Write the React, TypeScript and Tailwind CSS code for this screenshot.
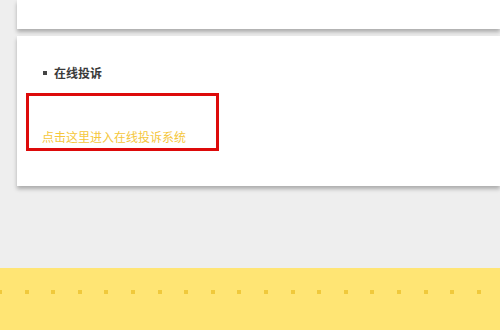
const dots = Array.from({ length: 19 });

export default function App() {
  return (
    <div
      className="w-[500px] h-[330px] overflow-hidden bg-[#eeeeee] flex flex-col"
      style={{ fontFamily: '"Microsoft YaHei", "Noto Sans CJK SC", sans-serif' }}
    >
      {/* card above (scrolled) */}
      <div className="ml-[17px] h-[29px] shrink-0 bg-white shadow-[0_3px_4px_rgba(0,0,0,0.28)]" />

      {/* complaint card */}
      <div className="ml-[17px] mt-[7px] h-[150px] shrink-0 bg-white shadow-[0_3px_4px_rgba(0,0,0,0.28)] pl-[9px] pt-[30px]">
        <div className="flex items-center pl-[17px] text-[12px] font-bold text-[#3a3a3a] leading-[14px]">
          <span className="w-[4px] h-[4px] bg-[#444444] mr-[7px]" />
          在线投诉
        </div>
        <div className="mt-[13px] w-[193px] h-[58px] border-[3px] border-[#dd0a0a] pt-[27px] pl-[13px]">
          <a className="text-[12px] text-[#f5c73c] leading-[14px] cursor-pointer">点击这里进入在线投诉系统</a>
        </div>
      </div>

      <div className="flex-1" />

      {/* yellow footer */}
      <div className="h-[62px] shrink-0 bg-[#ffe574] pt-[22px] flex">
        <div className="flex gap-[22.6px] -ml-[2px]">
          {dots.map((_, i) => (
            <span key={i} className="w-[4px] h-[4px] bg-[#f0c93c] shrink-0" />
          ))}
        </div>
      </div>
    </div>
  );
}
